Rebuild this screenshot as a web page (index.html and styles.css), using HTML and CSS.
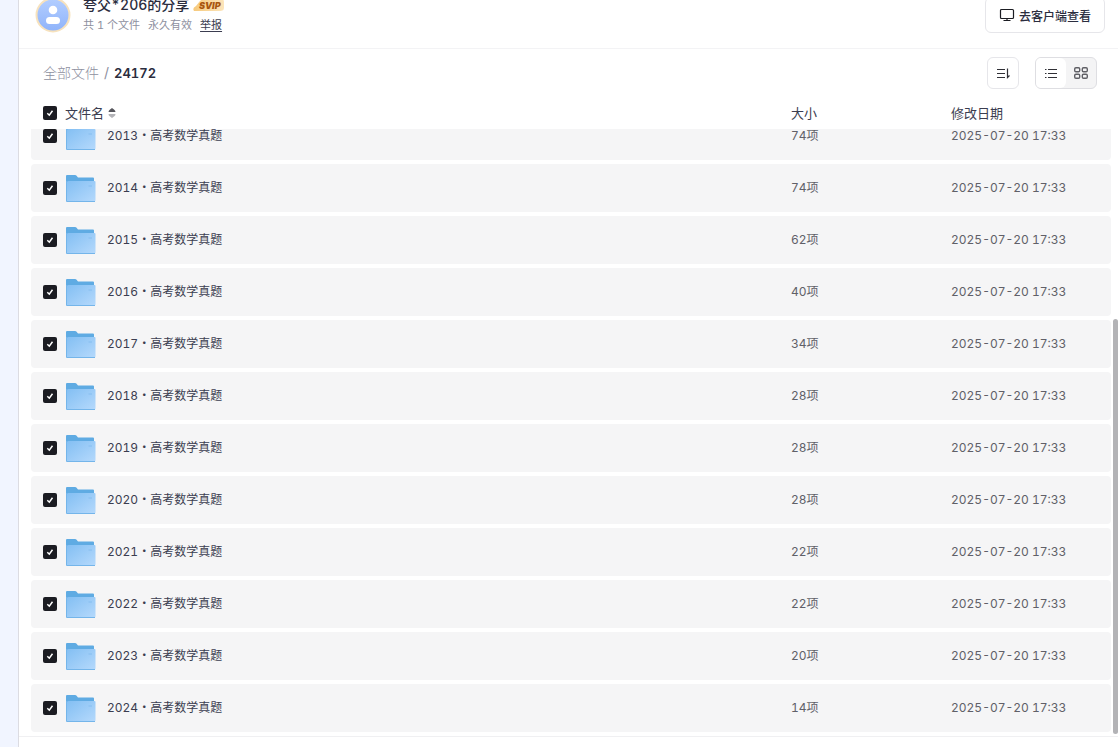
FILE: index.html
```html
<!DOCTYPE html>
<html lang="zh-CN">
  <head>
    <meta charset="UTF-8" />
    <meta name="viewport" content="width=device-width, initial-scale=1.0" />
    <title>夸父*206的分享</title>
    <link rel="stylesheet" href="styles.css">
  </head>
  <body>
    <svg class="defs" aria-hidden="true">
      <defs>
        <linearGradient id="folderFront" x1="0" y1="0" x2="1" y2="1">
          <stop offset="0" stop-color="#83bff3" />
          <stop offset="1" stop-color="#b5d9fc" />
        </linearGradient>
        <linearGradient id="badgeBg" x1="0" y1="0" x2="1" y2="0">
          <stop offset="0" stop-color="#f6c97c" />
          <stop offset="1" stop-color="#fce5bb" />
        </linearGradient>
        <linearGradient id="avatarBg" x1="0" y1="0" x2="0" y2="1">
          <stop offset="0" stop-color="#b3ceff" />
          <stop offset="1" stop-color="#8fb3fa" />
        </linearGradient>
        <symbol id="folder" viewBox="0 0 32 28">
          <path d="M1 27V2Q1 1 2 1H10Q11 1 11.600 1.800L13 3.500H28Q29 3.500 29 4.500V8H3V27Z" fill="#5fabe3" />
          <path d="M2 8Q2 7 3.500 7H29.500Q30.500 7 30.500 8V26.500Q30.500 27.500 29 27.500H2Z" fill="url(#folderFront)" />
          <path d="M1.500 7V27.500H30" fill="none" stroke="#74b5ea" />
          <path d="M23.500 12H27" stroke="#86bef0" />
        </symbol>
      </defs>
    </svg>
    <div class="page">
      <header class="header">
        <svg class="avatar" viewBox="0 0 36 36" aria-hidden="true">
          <circle cx="18" cy="18" r="16.500" fill="url(#avatarBg)" stroke="#f7e2bd" stroke-width="2" />
          <circle cx="18" cy="13" r="4.300" fill="#fff" />
          <rect x="11" y="20" width="14" height="7" rx="3.500" fill="#fff" />
        </svg>
        <div class="share">
          <div class="share-title">
            <span>夸父*206的分享</span>
            <span class="svip">
              <svg class="svip-bg" viewBox="0 0 31 13" aria-hidden="true">
                <path d="M1 12Q-1 9 3 7L7 2Q9 0 12 0H28Q31 0 31 3V9Q31 12 27 12Z" fill="url(#badgeBg)" />
              </svg>
              <b>SVIP</b>
            </span>
          </div>
          <div class="share-meta">
            <span>共 1 个文件</span>
            <span>永久有效</span>
            <a href="#">举报</a>
          </div>
        </div>
        <button class="client-button">
          <svg width="16" height="16" viewBox="0 0 16 16" fill="none" stroke="#1b1c22" stroke-width="1.200" aria-hidden="true">
            <rect x="1.500" y="2.500" width="13" height="9" rx="1" />
            <path d="M8 11.500V13.500M4.500 13.500H11.500" />
          </svg>
          去客户端查看
        </button>
      </header>

      <div class="toolbar">
        <nav class="crumbs">
          <a href="#">全部文件</a>
          <span>/</span>
          <strong>24172</strong>
        </nav>
        <button class="sort-button" aria-label="排序">
          <svg width="16" height="16" viewBox="0 0 16 16" fill="none" stroke="#303036" stroke-width="1.200" aria-hidden="true">
            <path d="M2 4.500H10M2 8.500H10M2 12.500H10M12.500 3.500V12.500L14.500 10.500" />
          </svg>
        </button>
        <div class="views">
          <button class="view active" aria-label="列表">
            <svg width="16" height="16" viewBox="0 0 16 16" fill="none" stroke="#303036" stroke-width="1.200" aria-hidden="true">
              <path d="M2 4.500H3.500M5 4.500H14M2 8.500H3.500M5 8.500H14M2 12.500H3.500M5 12.500H14" />
            </svg>
          </button>
          <button class="view" aria-label="网格">
            <svg width="16" height="16" viewBox="0 0 16 16" fill="none" stroke="#606066" stroke-width="1.400" aria-hidden="true">
              <rect x="1.700" y="2.700" width="5" height="4" rx="1.200" />
              <rect x="9.300" y="2.700" width="5" height="4" rx="1.200" />
              <rect x="1.700" y="9.300" width="5" height="4" rx="1.200" />
              <rect x="9.300" y="9.300" width="5" height="4" rx="1.200" />
            </svg>
          </button>
        </div>
      </div>

      <div class="files">
        <table class="file-table">
          <thead>
            <tr>
              <th class="name">
                <input type="checkbox" aria-label="全选" checked>
                <span>文件名</span>
                <svg class="sorter" width="8" height="12" viewBox="0 0 8 12" aria-hidden="true">
                  <path d="M.5 5Q.5 3.500 2 2.500L4 1L6 2.500Q7.500 3.500 7.500 5Z" fill="#55555c" />
                  <path d="M.5 7Q.5 8.500 2 9.500L4 11L6 9.500Q7.500 8.500 7.500 7Z" fill="#b4b4b8" />
                </svg>
              </th>
              <th>大小</th>
              <th>修改日期</th>
            </tr>
          </thead>
          <tbody>
            <tr>
              <td class="name"><input type="checkbox" id="y2013" checked><svg class="folder"><use href="#folder" /></svg><label for="y2013">2013・高考数学真题</label></td>
              <td>74项</td>
              <td>2025-07-20 17:33</td>
            </tr>
            <tr>
              <td class="name"><input type="checkbox" id="y2014" checked><svg class="folder"><use href="#folder" /></svg><label for="y2014">2014・高考数学真题</label></td>
              <td>74项</td>
              <td>2025-07-20 17:33</td>
            </tr>
            <tr>
              <td class="name"><input type="checkbox" id="y2015" checked><svg class="folder"><use href="#folder" /></svg><label for="y2015">2015・高考数学真题</label></td>
              <td>62项</td>
              <td>2025-07-20 17:33</td>
            </tr>
            <tr>
              <td class="name"><input type="checkbox" id="y2016" checked><svg class="folder"><use href="#folder" /></svg><label for="y2016">2016・高考数学真题</label></td>
              <td>40项</td>
              <td>2025-07-20 17:33</td>
            </tr>
            <tr>
              <td class="name"><input type="checkbox" id="y2017" checked><svg class="folder"><use href="#folder" /></svg><label for="y2017">2017・高考数学真题</label></td>
              <td>34项</td>
              <td>2025-07-20 17:33</td>
            </tr>
            <tr>
              <td class="name"><input type="checkbox" id="y2018" checked><svg class="folder"><use href="#folder" /></svg><label for="y2018">2018・高考数学真题</label></td>
              <td>28项</td>
              <td>2025-07-20 17:33</td>
            </tr>
            <tr>
              <td class="name"><input type="checkbox" id="y2019" checked><svg class="folder"><use href="#folder" /></svg><label for="y2019">2019・高考数学真题</label></td>
              <td>28项</td>
              <td>2025-07-20 17:33</td>
            </tr>
            <tr>
              <td class="name"><input type="checkbox" id="y2020" checked><svg class="folder"><use href="#folder" /></svg><label for="y2020">2020・高考数学真题</label></td>
              <td>28项</td>
              <td>2025-07-20 17:33</td>
            </tr>
            <tr>
              <td class="name"><input type="checkbox" id="y2021" checked><svg class="folder"><use href="#folder" /></svg><label for="y2021">2021・高考数学真题</label></td>
              <td>22项</td>
              <td>2025-07-20 17:33</td>
            </tr>
            <tr>
              <td class="name"><input type="checkbox" id="y2022" checked><svg class="folder"><use href="#folder" /></svg><label for="y2022">2022・高考数学真题</label></td>
              <td>22项</td>
              <td>2025-07-20 17:33</td>
            </tr>
            <tr>
              <td class="name"><input type="checkbox" id="y2023" checked><svg class="folder"><use href="#folder" /></svg><label for="y2023">2023・高考数学真题</label></td>
              <td>20项</td>
              <td>2025-07-20 17:33</td>
            </tr>
            <tr>
              <td class="name"><input type="checkbox" id="y2024" checked><svg class="folder"><use href="#folder" /></svg><label for="y2024">2024・高考数学真题</label></td>
              <td>14项</td>
              <td>2025-07-20 17:33</td>
            </tr>
          </tbody>
        </table>
        <div class="scroll-thumb"></div>
      </div>
      <footer class="footer"></footer>
    </div>
  </body>
</html>
```

FILE: styles.css
```css
* {
  box-sizing: border-box;
}
body {
  margin: 0;
  height: 100vh;
  padding-left: 18px;
  background-color: #f1f5ff;
  color: #3b3d50;
  font-family: Inter, "Noto Sans CJK SC", sans-serif;
  font-size: 12px;
  font-variant-numeric: tabular-nums;
  overflow: hidden;
}
button {
  font-family: inherit;
  cursor: pointer;
}
.defs {
  position: absolute;
  width: 0;
  height: 0;
}
.page {
  display: flex;
  flex-direction: column;
  height: 100%;
  background-color: #fff;
  border-left: 1px solid #dcdce2;
}

/* header */
.header {
  display: flex;
  align-items: flex-end;
  flex: none;
  height: 49px;
  padding: 0 13px 15px 16px;
  border-bottom: 1px solid #f3f3f5;
}
.avatar {
  width: 36px;
  height: 36px;
}
.share {
  margin-left: 12px;
}
.share-title {
  display: flex;
  align-items: center;
  gap: 4px;
  margin-bottom: 2px;
  font-size: 14px;
  font-weight: 500;
  line-height: 20px;
  color: #2b2d3e;
}
.svip {
  position: relative;
  width: 31px;
  height: 13px;
  line-height: 13px;
  text-align: center;
}
.svip b {
  position: relative;
  display: block;
  padding-left: 2px;
  font-size: 9px;
  font-weight: 900;
  font-style: italic;
  color: #a8560f;
}
.svip-bg {
  position: absolute;
  left: 0;
  top: 0;
  width: 31px;
  height: 13px;
}
.share-meta {
  display: flex;
  gap: 8px;
  font-size: 11px;
  line-height: 16px;
  color: #8e90a0;
}
.share-meta a {
  color: #3b3d50;
  text-underline-offset: 2px;
}
.client-button {
  display: flex;
  align-items: center;
  gap: 4px;
  height: 36px;
  margin-left: auto;
  padding: 0 13px;
  border: 1px solid #e6e6ea;
  border-radius: 6px;
  background-color: #fff;
  font-size: 12px;
  font-weight: 500;
  color: #2b2d3e;
}

/* toolbar */
.toolbar {
  display: flex;
  align-items: center;
  flex: none;
  height: 48px;
  padding: 0 21px 0 24px;
}
.crumbs {
  display: flex;
  gap: 5px;
  font-size: 14px;
  line-height: 20px;
  color: #8e90a0;
}
.crumbs a {
  color: #8e90a0;
  font-weight: 300;
  text-decoration: none;
}
.crumbs strong {
  font-size: 13px;
  font-weight: 600;
  color: #2b2d3e;
}
.sort-button {
  display: flex;
  align-items: center;
  justify-content: center;
  width: 32px;
  height: 32px;
  margin-left: auto;
  padding: 0;
  border: 1px solid #e6e6ea;
  border-radius: 6px;
  background-color: #fff;
}
.views {
  display: flex;
  height: 32px;
  margin-left: 16px;
  border: 1px solid #dedee2;
  border-radius: 6px;
  background-color: #f4f4f5;
  overflow: hidden;
}
.view {
  display: flex;
  align-items: center;
  justify-content: center;
  width: 30px;
  padding: 0;
  border: none;
  background-color: transparent;
}
.view.active {
  border-radius: 0 6px 6px 0;
  background-color: #fff;
}

/* file list, scrolled to the end */
.files {
  position: relative;
  flex: 1;
  min-height: 0;
  padding: 0 7px 0 12px;
}
.file-table {
  display: flex;
  flex-direction: column;
  height: 100%;
}
.file-table tr {
  display: grid;
  grid-template-columns: 1fr 160px 160px;
  align-items: center;
  padding-left: 12px;
}
.file-table thead tr {
  height: 32px;
}
.file-table tbody {
  display: flex;
  flex-direction: column;
  justify-content: flex-end;
  flex: 1;
  min-height: 0;
  gap: 4px;
  padding-bottom: 4px;
  overflow: hidden;
}
.file-table tbody tr {
  flex: none;
  height: 48px;
  border-radius: 4px;
  background-color: #f5f5f6;
}
th {
  padding: 0;
  font-size: 13px;
  font-weight: 400;
  line-height: 18px;
  text-align: left;
}
td {
  padding: 0;
  color: #606068;
  line-height: 18px;
}
.name {
  display: flex;
  align-items: center;
  color: #3b3d50;
}
input[type="checkbox"] {
  appearance: none;
  width: 14px;
  height: 14px;
  margin: 0 8px 0 0;
  border-radius: 2px;
  background: #1b1c22 url("data:image/svg+xml,%3Csvg xmlns='http://www.w3.org/2000/svg' viewBox='0 0 14 14'%3E%3Cpath d='M4.300 7.300L6.300 9.200L9.500 4.800' fill='none' stroke='white' stroke-width='1.500'/%3E%3C/svg%3E");
}
.sorter {
  margin-left: 4px;
}
.folder {
  width: 32px;
  height: 28px;
  margin-right: 10px;
}
.scroll-thumb {
  position: absolute;
  right: 0;
  bottom: 2px;
  width: 5px;
  height: 65%;
  border-radius: 3px;
  background-color: #b3b3b6;
}
.footer {
  flex: none;
  height: 11px;
  border-top: 1px solid #f0f0f2;
}
```
